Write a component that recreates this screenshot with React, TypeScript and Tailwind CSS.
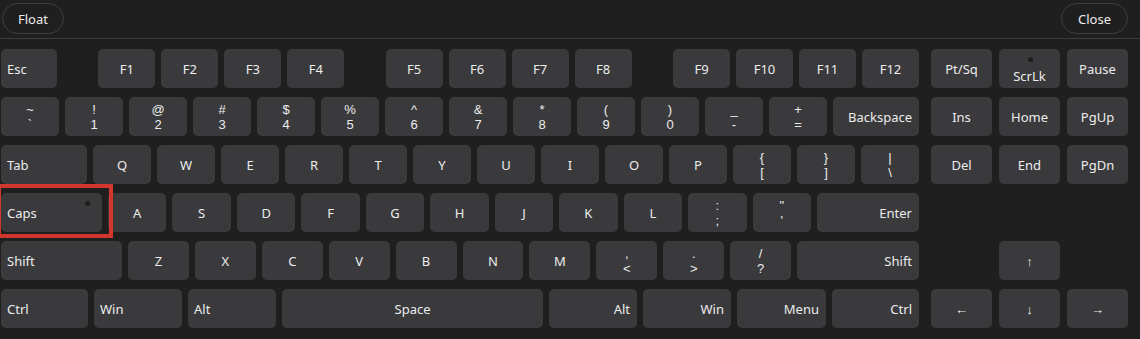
import React, { FC } from "react";

type KeyProps = {
  label: string;
  sub?: string;
  align?: "left" | "center" | "right";
  className?: string;
  dot?: "top" | "corner";
};

const Key: FC<KeyProps> = ({ label, sub, align = "center", className = "", dot }) => {
  const justify =
    align === "left" ? "justify-start pl-[6px]" : align === "right" ? "justify-end pr-[7px]" : "justify-center";
  return (
    <div
      className={`relative h-[39px] rounded-[5px] bg-[#3a3a3d] text-[#ececec] flex items-center ${justify} ${className}`}
    >
      {dot === "top" && (
        <span className="absolute left-1/2 top-[8px] -ml-[2px] w-[5px] h-[5px] rounded-full bg-[#1e1e1e]" />
      )}
      {dot === "corner" && (
        <span className="absolute right-[12px] top-[8px] w-[5px] h-[5px] rounded-full bg-[#1e1e1e]" />
      )}
      {sub !== undefined ? (
        <div
          className="flex flex-col items-center leading-[15px] text-[13px] mt-[1px]"
          style={{ fontFamily: '"Liberation Sans", Arial, sans-serif' }}
        >
          <span>{label}</span>
          <span>{sub}</span>
        </div>
      ) : (
        <span className={`text-[13px] ${dot === "top" ? "mt-[17px]" : "mt-[3px]"}`}>{label}</span>
      )}
    </div>
  );
};

const numRow: [string, string][] = [
  ["~", "`"],
  ["!", "1"],
  ["@", "2"],
  ["#", "3"],
  ["$", "4"],
  ["%", "5"],
  ["^", "6"],
  ["&", "7"],
  ["*", "8"],
  ["(", "9"],
  [")", "0"],
  ["_", "-"],
  ["+", "="],
];

const App: FC = () => {
  return (
    <div
      className="w-[1140px] h-[339px] bg-[#1f1f1f] overflow-hidden relative"
      style={{ fontFamily: '"Noto Sans", "Open Sans", sans-serif' }}
    >
      {/* top bar */}
      <div className="h-[39px] border-b border-[#3a3a3a] flex items-start justify-between px-[2px] pt-[3px]">
        <button className="h-[31px] w-[62px] pt-[3px] rounded-full border border-[#3e3e3e] text-[#ececec] text-[13px]">
          Float
        </button>
        <button className="h-[31px] w-[67px] pt-[3px] mr-[10px] rounded-full border border-[#3e3e3e] text-[#ececec] text-[13px]">
          Close
        </button>
      </div>

      <div className="flex pt-[10px] pl-[1px] gap-[12px]">
        {/* main block */}
        <div className="w-[918px] flex flex-col gap-[9px]">
          <div className="flex justify-between">
            <Key label="Esc" align="left" className="w-[56px]" />
            <div className="flex gap-[6px]">
              {["F1", "F2", "F3", "F4"].map((k) => (
                <Key key={k} label={k} className="w-[57px]" />
              ))}
            </div>
            <div className="flex gap-[6px]">
              {["F5", "F6", "F7", "F8"].map((k) => (
                <Key key={k} label={k} className="w-[57px]" />
              ))}
            </div>
            <div className="flex gap-[6px]">
              {["F9", "F10", "F11", "F12"].map((k) => (
                <Key key={k} label={k} className="w-[57px]" />
              ))}
            </div>
          </div>

          <div className="flex gap-[6px]">
            {numRow.map(([a, b]) => (
              <Key key={b} label={a} sub={b} className="w-[58px]" />
            ))}
            <Key label="Backspace" align="right" className="flex-1" />
          </div>

          <div className="flex gap-[6px]">
            <Key label="Tab" align="left" className="w-[86px]" />
            {["Q", "W", "E", "R", "T", "Y", "U", "I", "O", "P"].map((k) => (
              <Key key={k} label={k} className="flex-1" />
            ))}
            <Key label="{" sub="[" className="flex-1" />
            <Key label="}" sub="]" className="flex-1" />
            <Key label="|" sub="\" className="flex-1" />
          </div>

          <div className="flex gap-[6px]">
            <Key label="Caps" align="left" dot="corner" className="w-[101px]" />
            {["A", "S", "D", "F", "G", "H", "J", "K", "L"].map((k) => (
              <Key key={k} label={k} className="flex-1" />
            ))}
            <Key label=":" sub=";" className="flex-1" />
            <Key label={'"'} sub="'" className="flex-1" />
            <Key label="Enter" align="right" className="w-[102px]" />
          </div>

          <div className="flex gap-[6px]">
            <Key label="Shift" align="left" className="w-[121px]" />
            {["Z", "X", "C", "V", "B", "N", "M"].map((k) => (
              <Key key={k} label={k} className="flex-1" />
            ))}
            <Key label="," sub="<" className="flex-1" />
            <Key label="." sub=">" className="flex-1" />
            <Key label="/" sub="?" className="flex-1" />
            <Key label="Shift" align="right" className="w-[122px]" />
          </div>

          <div className="flex gap-[6px]">
            <Key label="Ctrl" align="left" className="w-[87px]" />
            <Key label="Win" align="left" className="w-[88px]" />
            <Key label="Alt" align="left" className="w-[88px]" />
            <Key label="Space" className="flex-1" />
            <Key label="Alt" align="right" className="w-[88px]" />
            <Key label="Win" align="right" className="w-[88px]" />
            <Key label="Menu" align="right" className="w-[89px]" />
            <Key label="Ctrl" align="right" className="w-[87px]" />
          </div>
        </div>

        {/* nav cluster */}
        <div className="grid grid-cols-[61px_61px_61px] grid-rows-[39px_39px_39px_39px_39px_39px] gap-x-[7px] gap-y-[9px]">
          <Key label="Pt/Sq" />
          <Key label="ScrLk" dot="top" />
          <Key label="Pause" />
          <Key label="Ins" />
          <Key label="Home" />
          <Key label="PgUp" />
          <Key label="Del" />
          <Key label="End" />
          <Key label="PgDn" />
          <div />
          <div />
          <div />
          <div />
          <Key label="↑" className="text-[11px]" />
          <div />
          <Key label="←" />
          <Key label="↓" />
          <Key label="→" />
        </div>
      </div>

      {/* highlight around caps */}
      <div className="absolute left-[-3px] top-[184px] w-[116px] h-[54px] border-[4px] border-[#d1372f] pointer-events-none" />
    </div>
  );
};

export default App;
